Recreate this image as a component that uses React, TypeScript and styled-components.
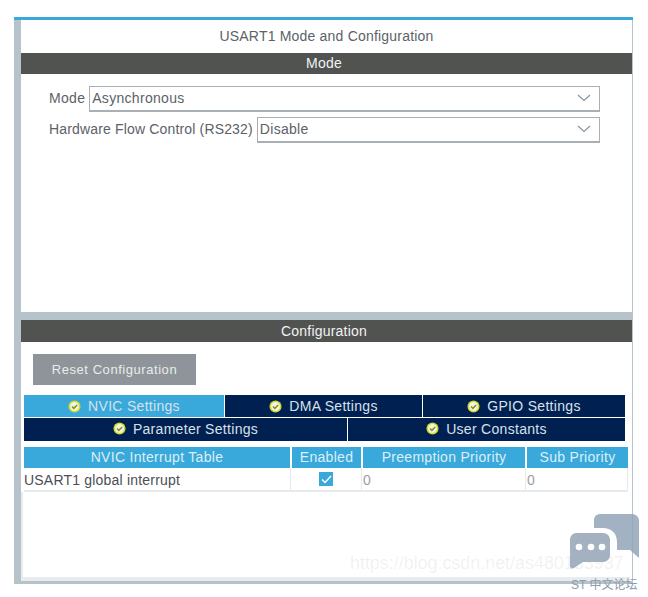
import { createGlobalStyle } from 'styled-components';
import styled from 'styled-components';

const GlobalStyle = createGlobalStyle`
    html, body {
        margin: 0;
        padding: 0;
        background: #fff;
    }
    #root {
        width: 648px;
        height: 597px;
        overflow: hidden;
    }
`

const Page = styled.div`
    position: relative;
    width: 648px;
    height: 597px;
    padding: 17px 15px 13px 14px;
    box-sizing: border-box;
    font-family: "Liberation Sans", Arial, sans-serif;
    font-size: 14px;
    letter-spacing: 0.2px;
    color: #5c6268;
`

const Frame = styled.div`
    display: flex;
    flex-direction: column;
    height: 100%;
    box-sizing: border-box;
    background: #b6c3ca;
    border-top: 3px solid #39a9dc;
    padding: 0 1px 3px 7px;
`

const ModePanel = styled.section`
    height: 292px;
    background: #fff;
    flex: none;
`

const Title = styled.div`
    height: 33px;
    line-height: 33px;
    text-align: center;
`

const BarHeading = styled.div<{ $height: number }>`
    height: ${props => props.$height}px;
    line-height: ${props => props.$height}px;
    padding-right: 5px;
    background: #515351;
    color: #f2f2f2;
    text-align: center;
`

const FormRows = styled.div`
    display: flex;
    flex-direction: column;
    gap: 5px;
    padding: 12px 32px 0 28px;
`

const FormRow = styled.div`
    display: flex;
    align-items: center;
    gap: 4px;
`

const FieldLabel = styled.span<{ $tight?: boolean }>`
    padding-bottom: 2px;
    letter-spacing: ${props => (props.$tight ? '0.16px' : '0.3px')};
`

const Select = styled.div`
    flex: 1;
    display: flex;
    align-items: center;
    justify-content: space-between;
    height: 26px;
    box-sizing: border-box;
    border: 1px solid #a9b0b5;
    border-bottom-width: 2px;
    padding: 0 8px 1px 2px;
    color: #5c6268;
    letter-spacing: 0.3px;
`

const ConfigPanel = styled.section`
    flex: 1;
    margin-top: 8px;
    display: flex;
    flex-direction: column;
    background: #fff;
`

const ConfigBody = styled.div`
    flex: 1;
    display: flex;
    flex-direction: column;
    padding: 12px 4px 0 2px;
`

const ResetButton = styled.button`
    align-self: flex-start;
    width: 163px;
    height: 31px;
    margin-left: 10px;
    border: 0;
    padding: 0;
    background: #8e9499;
    color: #e9ecee;
    font: inherit;
    font-size: 13px;
    letter-spacing: 0.55px;
`

const TabRow = styled.div<{ $columns: string; $top: number }>`
    display: grid;
    grid-template-columns: ${props => props.$columns};
    gap: 1px;
    width: 601px;
    margin-top: ${props => props.$top}px;
    margin-left: 1px;
`

const Tab = styled.div<{ $active?: boolean; $lower?: boolean }>`
    display: flex;
    align-items: center;
    justify-content: center;
    gap: 7px;
    box-sizing: border-box;
    height: ${props => (props.$lower ? '23px' : '22px')};
    padding-bottom: ${props => (props.$lower ? '2px' : '0')};
    background: ${props => (props.$active ? '#39a9dc' : '#002052')};
    color: #d8e0e8;
    letter-spacing: 0.3px;
`

const TableHead = styled.div`
    display: grid;
    grid-template-columns: 266px 69px 162px 101px;
    gap: 2px;
    margin-top: 6px;
    margin-left: 1px;
`

const HeadCell = styled.div`
    height: 21px;
    line-height: 21px;
    background: #39a9dc;
    color: #dceff8;
    text-align: center;
    letter-spacing: 0.3px;
`

const TableRow = styled.div`
    display: grid;
    grid-template-columns: 267px 71px 164px 102px;
    height: 24px;
    margin-left: 1px;
    border-bottom: 2px solid #e6eaed;
    background: #fff;
    box-sizing: border-box;
`

const Cell = styled.div<{ $muted?: boolean; $centered?: boolean }>`
    display: flex;
    align-items: center;
    justify-content: ${props => (props.$centered ? 'center' : 'flex-start')};
    padding-left: ${props => (props.$muted ? '1px' : '0')};
    padding-top: ${props => (props.$centered ? '0' : '2px')};
    border-right: 1px solid #e6eaed;
    color: ${props => (props.$muted ? '#9aa0a5' : '#4a4f55')};
`

const Checkbox = styled.span`
    display: flex;
    align-items: center;
    justify-content: center;
    width: 14px;
    height: 14px;
    background: #39a9dc;
`

const EmptyArea = styled.div`
    flex: 1;
    margin-left: -2px;
    margin-right: -2px;
    border-left: 2px solid #e8ecef;
    border-bottom: 4px solid #e8ecef;
    background: #fff;
`

const Watermark = styled.span`
    position: absolute;
    left: 350px;
    top: 553px;
    font-family: "Liberation Sans", sans-serif;
    font-size: 18px;
    letter-spacing: -0.05px;
    color: rgba(90, 90, 90, 0.09);
`

const ChatLogo = styled.svg`
    position: absolute;
    left: 568px;
    top: 512px;
`

const ForumLabel = styled.span`
    position: absolute;
    left: 571px;
    top: 575px;
    font-family: "Liberation Sans", "Noto Sans CJK SC", sans-serif;
    font-size: 12px;
    letter-spacing: 0;
    color: #8d9cab;
`

function Chevron() {
    return (
        <svg width="14" height="8" viewBox="0 0 14 8" fill="none">
            <path d="M1 1l6 5.5L13 1" stroke="#8b9196" strokeWidth="1.1" />
        </svg>
    )
}

function CheckBadge() {
    return (
        <svg width="13" height="13" viewBox="0 0 14 14">
            <circle cx="7" cy="7" r="6.5" fill="#d3d92a" />
            <circle cx="7" cy="7" r="4.8" fill="#f4f6dc" />
            <path d="M4.3 7l2 2 3.6-3.6" fill="none" stroke="#7f8f2a" strokeWidth="1.6" />
        </svg>
    )
}

function App() {
    return (
        <Page>
            <GlobalStyle />
            <Frame>
                <ModePanel>
                    <Title>USART1 Mode and Configuration</Title>
                    <BarHeading $height={21}>Mode</BarHeading>
                    <FormRows>
                        <FormRow>
                            <FieldLabel>Mode</FieldLabel>
                            <Select>
                                Asynchronous
                                <Chevron />
                            </Select>
                        </FormRow>
                        <FormRow>
                            <FieldLabel $tight>Hardware Flow Control (RS232)</FieldLabel>
                            <Select>
                                Disable
                                <Chevron />
                            </Select>
                        </FormRow>
                    </FormRows>
                </ModePanel>
                <ConfigPanel>
                    <BarHeading $height={22}>Configuration</BarHeading>
                    <ConfigBody>
                        <ResetButton>Reset Configuration</ResetButton>
                        <TabRow $columns="200px 197px 202px" $top={10}>
                            <Tab $active><CheckBadge />NVIC Settings</Tab>
                            <Tab><CheckBadge />DMA Settings</Tab>
                            <Tab><CheckBadge />GPIO Settings</Tab>
                        </TabRow>
                        <TabRow $columns="323px 277px" $top={1}>
                            <Tab $lower><CheckBadge />Parameter Settings</Tab>
                            <Tab $lower><CheckBadge />User Constants</Tab>
                        </TabRow>
                        <TableHead>
                            <HeadCell>NVIC Interrupt Table</HeadCell>
                            <HeadCell>Enabled</HeadCell>
                            <HeadCell>Preemption Priority</HeadCell>
                            <HeadCell>Sub Priority</HeadCell>
                        </TableHead>
                        <TableRow>
                            <Cell>USART1 global interrupt</Cell>
                            <Cell $centered>
                                <Checkbox>
                                    <svg width="11" height="9" viewBox="0 0 11 9">
                                        <path d="M1 4.5l3 3 6-6.5" fill="none" stroke="#fff" strokeWidth="1.4" />
                                    </svg>
                                </Checkbox>
                            </Cell>
                            <Cell $muted>0</Cell>
                            <Cell $muted>0</Cell>
                        </TableRow>
                        <EmptyArea />
                    </ConfigBody>
                </ConfigPanel>
            </Frame>
            <Watermark>https://blog.csdn.net/as480133937</Watermark>
            <ChatLogo width="72" height="58" viewBox="0 0 72 58">
                <path
                    d="M26 8c0-4 3-6 7-6h31c4 0 7 3 7 7v37l-9-8H49V30c0-9-6-14-14-14h-9z"
                    fill="#8fa1b4"
                    fillOpacity="0.82"
                />
                <path
                    d="M8 21h27c4 0 7 3 7 7v15c0 4-3 7-7 7H15l-9 6c-2 1-4 0-4-2V28c0-4 3-7 6-7z"
                    fill="#a3b1c0"
                />
                <circle cx="11" cy="35" r="3.300" fill="#fff" />
                <circle cx="23" cy="35" r="3.300" fill="#fff" />
                <circle cx="34" cy="35" r="3.300" fill="#fff" />
            </ChatLogo>
            <ForumLabel>ST 中文论坛</ForumLabel>
        </Page>
    )
}

export default App
